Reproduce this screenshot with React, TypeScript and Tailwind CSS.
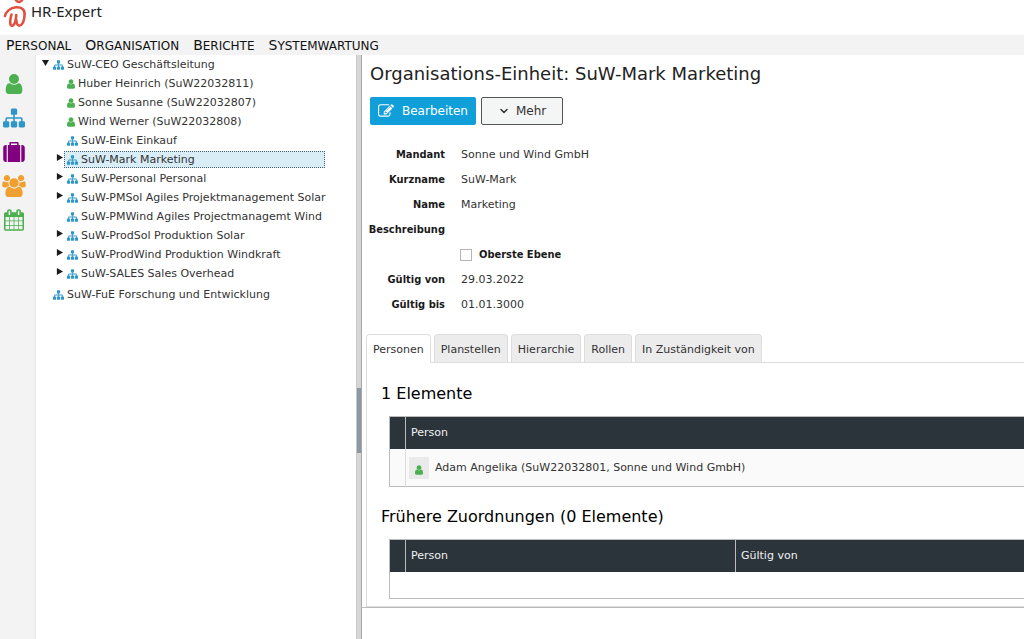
import React, { useState } from 'react';
import { ChevronDown } from 'lucide-react';
import clsx from 'clsx';

const icons = {
  user: {
    viewBox: '256 128 1280 1536',
    d: 'M1536 1399q0 109-62.5 187t-150.5 78h-854q-88 0-150.5-78t-62.5-187q0-85 8.5-160.5t31.5-152 58.5-131 94-89 134.5-34.5q131 128 313 128t313-128q76 0 134.5 34.5t94 89 58.5 131 31.5 152 8.5 160.5zm-256-887q0 159-112.5 271.5t-271.5 112.5-271.5-112.5-112.5-271.5 112.5-271.5 271.5-112.5 271.5 112.5 112.5 271.5z',
  },
  sitemap: {
    viewBox: '0 128 1792 1536',
    d: 'M1792 1248v320q0 40-28 68t-68 28h-320q-40 0-68-28t-28-68v-320q0-40 28-68t68-28h96v-192h-512v192h96q40 0 68 28t28 68v320q0 40-28 68t-68 28h-320q-40 0-68-28t-28-68v-320q0-40 28-68t68-28h96v-192h-512v192h96q40 0 68 28t28 68v320q0 40-28 68t-68 28h-320q-40 0-68-28t-28-68v-320q0-40 28-68t68-28h96v-192q0-52 38-90t90-38h512v-192h-96q-40 0-68-28t-28-68v-320q0-40 28-68t68-28h320q40 0 68 28t28 68v320q0 40-28 68t-68 28h-96v192h512q52 0 90 38t38 90v192h96q40 0 68 28t28 68z',
  },
  suitcase: {
    viewBox: '0 0 1792 1664',
    d: 'M640 256h512v-128h-512v128zm-352 0v1408h-64q-92 0-158-66t-66-158v-960q0-92 66-158t158-66h64zm1120 0v1408h-1024v-1408h128v-160q0-40 28-68t68-28h576q40 0 68 28t28 68v160h128zm384 224v960q0 92-66 158t-158 66h-64v-1408h64q92 0 158 66t66 158z',
  },
  users: {
    viewBox: '0 0 1920 1792',
    d: 'M593 896q-162 5-265 128h-134q-82 0-138-40.5t-56-118.5q0-353 124-353 6 0 43.5 21t97.5 42.5 119 21.5q67 0 133-23-5 37-5 66 0 139 81 256zm1071 637q0 120-73 189.5t-194 69.5h-874q-121 0-194-69.5t-73-189.5q0-53 3.5-103.5t14-109 26.5-108.5 43-97.5 62-81 85.5-53.5 111.5-20q10 0 43 21.5t73 48 107 48 135 21.5 135-21.5 107-48 73-48 43-21.5q61 0 111.5 20t85.5 53.5 62 81 43 97.5 26.5 108.5 14 109 3.5 103.5zm-1024-1277q0 106-75 181t-181 75-181-75-75-181 75-181 181-75 181 75 75 181zm704 384q0 159-112.5 271.5t-271.5 112.5-271.5-112.5-112.5-271.5 112.5-271.5 271.5-112.5 271.5 112.5 112.5 271.5zm576 225q0 78-56 118.5t-138 40.5h-134q-103-123-265-128 81-117 81-256 0-29-5-66 66 23 133 23 59 0 119-21.5t97.5-42.5 43.5-21q124 0 124 353zm-128-609q0 106-75 181t-181 75-181-75-75-181 75-181 181-75 181 75 75 181z',
  },
  calendar: {
    viewBox: '64 0 1664 1792',
    d: 'M192 1664h288v-288h-288v288zm352 0h320v-288h-320v288zm-352-352h288v-320h-288v320zm352 0h320v-320h-320v320zm-352-384h288v-288h-288v288zm736 736h320v-288h-320v288zm-384-736h320v-288h-320v288zm768 736h288v-288h-288v288zm-384-352h320v-320h-320v320zm-352-864v-288q0-13-9.5-22.5t-22.5-9.5h-64q-13 0-22.5 9.5t-9.5 22.5v288q0 13 9.5 22.5t22.5 9.5h64q13 0 22.5-9.5t9.5-22.5zm736 864h288v-320h-288v320zm-384-384h320v-288h-320v288zm384 0h288v-288h-288v288zm32-480v-288q0-13-9.5-22.5t-22.5-9.5h-64q-13 0-22.5 9.5t-9.5 22.5v288q0 13 9.5 22.5t22.5 9.5h64q13 0 22.5-9.5t9.5-22.5zm384-64v1280q0 52-38 90t-90 38h-1408q-52 0-90-38t-38-90v-1280q0-52 38-90t90-38h128v-96q0-66 47-113t113-47h64q66 0 113 47t47 113v96h384v-96q0-66 47-113t113-47h64q66 0 113 47t47 113v96h128q52 0 90 38t38 90z',
  },
  edit: {
    viewBox: '0 128 1792 1536',
    d: 'M888 1184l116-116-152-152-116 116v56h96v96h56zm440-720q-16-16-33 1l-350 350q-17 17-1 33t33-1l350-350q17-17 1-33zm80 594v190q0 119-84.5 203.5t-203.5 84.5h-832q-119 0-203.5-84.5t-84.5-203.5v-832q0-119 84.5-203.5t203.5-84.5h832q63 0 117 25 15 7 18 23 3 17-9 29l-49 49q-14 14-32 8-23-6-45-6h-832q-66 0-113 47t-47 113v832q0 66 47 113t113 47h832q66 0 113-47t47-113v-126q0-13 9-22l64-64q15-15 35-7t20 29zm-96-738l288 288-672 672h-288v-288zm444 132l-92 92-288-288 92-92q28-28 68-28t68 28l152 152q28 28 28 68t-28 68z',
  },
};

type IconName = keyof typeof icons;

const Icon = ({ name, className }: { name: IconName; className?: string }) => (
  <svg viewBox={icons[name].viewBox} fill="currentColor" aria-hidden="true" className={clsx('shrink-0', className)}>
    <path d={icons[name].d} />
  </svg>
);

const Logo = () => (
  <svg viewBox="0 0 24 28" fill="none" stroke="#e2503f" strokeWidth="2.6" strokeLinecap="round" strokeLinejoin="round" aria-hidden="true" className="w-6 h-7">
    <circle cx="16" cy="-1.500" r="3.400" />
    <path d="M2 16C2.500 12.500 7 7.500 13 7.200C19 7 21.800 9.500 21.600 14.500C21.400 19 20.500 23 18 25C15.500 26.500 13.500 25 13.300 20" />
    <path d="M8.500 14.500C7.500 18 6.800 22 7.500 24.500C8.500 27 11 25.500 12 22.500C12.800 20 13 17.500 13.300 15" />
  </svg>
);

const menu = ['Personal', 'Organisation', 'Berichte', 'Systemwartung'];

const rail: { icon: IconName; label: string; className: string; size: string }[] = [
  { icon: 'user', label: 'Personen', className: 'text-[#4caf50]', size: 'w-[18px] h-5' },
  { icon: 'sitemap', label: 'Organisation', className: 'text-[#2f96c8]', size: 'w-[22px] h-5' },
  { icon: 'suitcase', label: 'Stellen', className: 'text-[#800080]', size: 'w-[22px] h-5' },
  { icon: 'users', label: 'Gruppen', className: 'text-[#f0a030]', size: 'w-6 h-[22px]' },
  { icon: 'calendar', label: 'Kalender', className: 'text-[#4caf50]', size: 'w-5 h-[22px]' },
];

type Node = { label: string; person?: boolean; expandable?: boolean };

const children: Node[] = [
  { label: 'Huber Heinrich (SuW22032811)', person: true },
  { label: 'Sonne Susanne (SuW22032807)', person: true },
  { label: 'Wind Werner (SuW22032808)', person: true },
  { label: 'SuW-Eink Einkauf' },
  { label: 'SuW-Mark Marketing', expandable: true },
  { label: 'SuW-Personal Personal', expandable: true },
  { label: 'SuW-PMSol Agiles Projektmanagement Solar', expandable: true },
  { label: 'SuW-PMWind Agiles Projectmanagemt Wind' },
  { label: 'SuW-ProdSol Produktion Solar', expandable: true },
  { label: 'SuW-ProdWind Produktion Windkraft', expandable: true },
  { label: 'SuW-SALES Sales Overhead', expandable: true },
];

const TreeRow = ({ node, open, selected, onSelect }: { node: Node; open?: boolean; selected: boolean; onSelect: () => void }) => (
  <div className="flex h-[19px] items-center">
    <span className="flex w-[10px] h-full pt-[3px] shrink-0 justify-center">
      {node.expandable && (
        <button type="button" aria-label={`${node.label} ${open ? 'zuklappen' : 'aufklappen'}`} className="flex h-2 items-center">
          <svg viewBox="0 0 8 8" fill="#1c1c1c" className="w-[7px] h-[7px]">
            <path d={open ? 'M0 1h8L4 8z' : 'M1 0v8l7-4z'} />
          </svg>
        </button>
      )}
    </span>
    <button
      type="button"
      onClick={onSelect}
      className={clsx(
        'flex h-[17px] flex-1 items-center gap-[3px] border border-dotted pl-[2px] text-left whitespace-nowrap',
        selected ? 'border-[#48606c] bg-[#d9edf7]' : 'border-transparent'
      )}
    >
      {node.person ? (
        <Icon name="user" className="w-2 h-[10px] text-[#4caf50]" />
      ) : (
        <Icon name="sitemap" className="w-[11px] h-[10px] text-[#2f96c8]" />
      )}
      {node.label}
    </button>
  </div>
);

const Tree = () => {
  const [selected, setSelected] = useState('SuW-Mark Marketing');
  const row = (node: Node, open = false) => (
    <TreeRow node={node} open={open} selected={selected === node.label} onSelect={() => setSelected(node.label)} />
  );

  return (
    <ul className="w-[285px]">
      <li>
        {row({ label: 'SuW-CEO Geschäftsleitung', expandable: true }, true)}
        <ul className="pl-[14px] mb-[2px]">
          {children.map((node) => (
            <li key={node.label}>{row(node)}</li>
          ))}
        </ul>
      </li>
      <li>{row({ label: 'SuW-FuE Forschung und Entwicklung' })}</li>
    </ul>
  );
};

const Field = ({ label, value }: { label: string; value?: string }) => (
  <div className="flex h-[25px] items-center gap-4">
    <dt className="w-[78px] text-right font-['DejaVu_Sans_Condensed','DejaVu_Sans',sans-serif] font-bold text-[#1a1a1a]">{label}</dt>
    <dd>{value}</dd>
  </div>
);

const tabs = ['Personen', 'Planstellen', 'Hierarchie', 'Rollen', 'In Zuständigkeit von'];

const Tabs = () => {
  const [active, setActive] = useState('Personen');
  return (
    <div role="tablist" className="flex gap-[3px] border-b border-[#dddddd]">
      {tabs.map((tab) => (
        <button
          key={tab}
          type="button"
          role="tab"
          aria-selected={tab === active}
          onClick={() => setActive(tab)}
          className={clsx(
            'h-7 rounded-t border border-b-0 border-[#dddddd] px-[6px] pt-[2px] whitespace-nowrap',
            tab === active ? '-mb-px h-[29px] bg-white' : 'bg-[#ececec]'
          )}
        >
          {tab}
        </button>
      ))}
    </div>
  );
};

export default function App() {
  return (
    <div className="flex min-h-screen flex-col overflow-hidden bg-white font-['DejaVu_Sans',sans-serif] text-[11px] leading-4 text-[#333333]">
      <header className="flex h-[35px] items-start gap-1 pl-[3px]">
        <Logo />
        <span className="pt-px font-['Noto_Sans',sans-serif] text-[15px] leading-5 text-[#222222]">HR-Expert</span>
      </header>

      <nav className="flex h-5 items-center gap-[14px] bg-[#f3f3f3] pl-[6px] text-xs text-[#111111] uppercase">
        {menu.map((item) => (
          <a key={item} href="#" className="block first-letter:text-sm">{item}</a>
        ))}
      </nav>

      <div className="flex flex-1">
        {/* Icon rail */}
        <nav className="flex w-9 shrink-0 flex-col items-start gap-[6px] bg-[#f3f3f3] pt-[15px] border-r border-[#e8e8e8]">
          {rail.map((item) => (
            <a key={item.label} href="#" aria-label={item.label} className="flex h-7 w-7 items-center justify-center">
              <Icon name={item.icon} className={clsx(item.size, item.className)} />
            </a>
          ))}
        </nav>

        <aside className="w-80 shrink-0 pl-1">
          <Tree />
        </aside>

        {/* Splitter with its grip */}
        <div className="flex w-[6px] shrink-0 items-start border-x border-l-[#c8c8c8] border-r-[#a8a8a8] bg-[#d6d6d6] pt-[333px]">
          <span className="h-[65px] w-full bg-[#8b99a6]" />
        </div>

        <main className="flex min-w-0 flex-1 flex-col">
          <div className="border-b border-[#bbbbbb]">
            <h1 className="pl-2 pt-2 text-lg leading-[22px] text-[#222222]">Organisations-Einheit: SuW-Mark Marketing</h1>
            <div className="flex gap-[5px] pl-2 pt-3 text-xs">
              <button type="button" className="flex h-7 items-center gap-2 rounded-xs bg-[#109fd9] px-2 text-white">
                <Icon name="edit" className="w-4 h-[14px]" />
                Bearbeiten
              </button>
              <button type="button" className="flex h-7 items-center gap-[6px] rounded-xs border border-[#555555] bg-[#f4f5f5] px-4">
                <ChevronDown size={12} strokeWidth={3} />
                Mehr
              </button>
            </div>

            <dl className="pl-[5px] pt-[17px]">
              <Field label="Mandant" value="Sonne und Wind GmbH" />
              <Field label="Kurzname" value="SuW-Mark" />
              <Field label="Name" value="Marketing" />
              <Field label="Beschreibung" />
              <div className="flex h-[25px] items-center pl-[93px]">
                <dt className="flex items-center gap-[7px] font-['DejaVu_Sans_Condensed','DejaVu_Sans',sans-serif] font-bold text-[#1a1a1a]">
                  <input id="top-level" type="checkbox" className="size-3 appearance-none border border-[#b5b5b5] bg-white checked:bg-[#109fd9]" />
                  <label htmlFor="top-level">Oberste Ebene</label>
                </dt>
              </div>
              <Field label="Gültig von" value="29.03.2022" />
              <Field label="Gültig bis" value="01.01.3000" />
            </dl>

            <section className="pl-1 pt-[17px]">
              <Tabs />
              <div className="border-b border-l border-[#dddddd] pb-[7px] pl-[14px]">
                <h2 className="pt-5 text-base leading-[22px] text-black">1 Elemente</h2>
                <div className="pl-2 pt-[11px]">
                  <table className="w-full table-fixed border-collapse border border-r-0 border-[#bbbbbb] text-left">
                    <thead className="bg-[#2c343b] text-[#f0f0f0]">
                      <tr className="h-8">
                        <th className="w-4" />
                        <th className="border-l border-[#bbbbbb] px-[5px] font-normal">Person</th>
                      </tr>
                    </thead>
                    <tbody>
                      <tr className="h-[38px] bg-[#fafafa]">
                        <td />
                        <td className="border-l border-[#dddddd] px-[3px] pt-[2px]">
                          <div className="flex items-center gap-[6px]">
                            <button type="button" aria-label="Person öffnen" className="flex h-[22px] w-5 items-center justify-center bg-[#eaeaea] pt-1">
                              <Icon name="user" className="w-2 h-[10px] text-[#4caf50]" />
                            </button>
                            Adam Angelika (SuW22032801, Sonne und Wind GmbH)
                          </div>
                        </td>
                      </tr>
                    </tbody>
                  </table>
                </div>

                <h2 className="pt-[19px] text-base leading-[22px] text-black">Frühere Zuordnungen (0 Elemente)</h2>
                <div className="pl-2 pt-[11px]">
                  <table className="w-full table-fixed border-collapse border border-r-0 border-[#bbbbbb] text-left">
                    <thead className="bg-[#2c343b] text-[#f0f0f0]">
                      <tr className="h-8">
                        <th className="w-4" />
                        <th className="w-[330px] border-l border-[#bbbbbb] px-[5px] font-normal">Person</th>
                        <th className="border-l border-[#bbbbbb] px-[5px] font-normal">Gültig von</th>
                      </tr>
                    </thead>
                    <tbody>
                      <tr className="h-[27px]">
                        <td colSpan={3} />
                      </tr>
                    </tbody>
                  </table>
                </div>
              </div>
            </section>
          </div>
        </main>
      </div>
    </div>
  );
}
